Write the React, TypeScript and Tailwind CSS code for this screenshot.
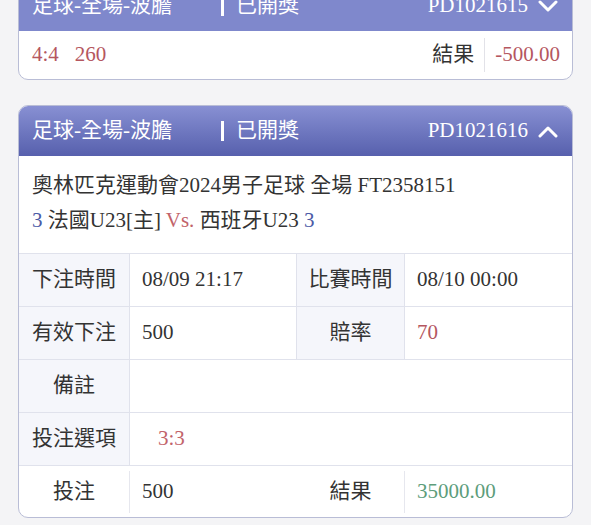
import React from "react";

const FONT = { fontFamily: '"Liberation Serif", "Noto Sans CJK TC", serif' };

function Chevron({ up }: { up?: boolean }) {
  return (
    <svg width="20" height="14" viewBox="0 0 20 14" className="ml-[10px]">
      <path
        d={up ? "M2 12 L10 4 L18 12" : "M2 3 L10 11 L18 3"}
        fill="none"
        stroke="white"
        strokeWidth="3"
        strokeLinecap="round"
        strokeLinejoin="round"
      />
    </svg>
  );
}

function Header({ id, up, flat }: { id: string; up?: boolean; flat?: boolean }) {
  return (
    <div
      className={`h-[50px] flex items-center pl-[13px] pr-[14px] text-white text-[21px] ${
        flat ? "bg-[#7f88cc]" : "bg-gradient-to-b from-[#8890d3] to-[#5760ad]"
      }`}
    >
      <span className="w-[189px]">足球-全場-波膽</span>
      <span className="w-[3px] h-[20px] bg-white mr-[12px]" />
      <span>已開獎</span>
      <span className="ml-auto flex items-center">
        {id}
        <Chevron up={up} />
      </span>
    </div>
  );
}

export default function App() {
  return (
    <div className="w-[591px] h-[525px] overflow-hidden bg-[#f4f4f6] text-[#333]" style={FONT}>
      <div className="px-[18px]">
        {/* Card 1 (cut off) */}
        <div className="-mt-[20px] rounded-[10px] border border-[#b9bdd6] bg-white overflow-hidden">
          <Header id="PD1021615" flat />
          <div className="h-[48px] flex items-center pl-[13px] pr-[12px] text-[21px]">
            <span className="text-[#b5575f]">4:4</span>
            <span className="text-[#b5575f] ml-[16px]">260</span>
            <span className="ml-auto">結果</span>
            <span className="w-px h-[34px] bg-[#e2e2e8] mx-[10px]" />
            <span className="text-[#b5575f]">-500.00</span>
          </div>
        </div>

        {/* Card 2 */}
        <div className="mt-[25px] rounded-[10px] border border-[#b9bdd6] bg-white overflow-hidden">
          <Header id="PD1021616" up />
          <div className="pl-[13px] pt-[12px] pb-[15px] text-[21px] leading-[35px]">
            <div>奧林匹克運動會2024男子足球 全場 FT2358151</div>
            <div>
              <span className="text-[#4b5aa6]">3</span> 法國U23[主]{" "}
              <span className="text-[#c2636a]">Vs.</span> 西班牙U23{" "}
              <span className="text-[#4b5aa6]">3</span>
            </div>
          </div>
          <div className="grid grid-cols-[111px_167px_108px_1fr] text-[21px]">
            {/* row 1 */}
            <div className="h-[53px] flex items-center justify-center bg-[#f5f6fb] border-t border-r border-[#e0e2ec]">下注時間</div>
            <div className="h-[53px] flex items-center pl-[12px] border-t border-r border-[#e0e2ec]">08/09 21:17</div>
            <div className="h-[53px] flex items-center justify-center bg-[#f5f6fb] border-t border-r border-[#e0e2ec]">比賽時間</div>
            <div className="h-[53px] flex items-center pl-[12px] border-t border-[#e0e2ec]">08/10 00:00</div>
            {/* row 2 */}
            <div className="h-[53px] flex items-center justify-center bg-[#f5f6fb] border-t border-r border-[#e0e2ec]">有效下注</div>
            <div className="h-[53px] flex items-center pl-[12px] border-t border-r border-[#e0e2ec]">500</div>
            <div className="h-[53px] flex items-center justify-center bg-[#f5f6fb] border-t border-r border-[#e0e2ec]">賠率</div>
            <div className="h-[53px] flex items-center pl-[12px] border-t border-[#e0e2ec] text-[#b5575f]">70</div>
            {/* row 3 */}
            <div className="h-[53px] flex items-center justify-center bg-[#f5f6fb] border-t border-r border-[#e0e2ec]">備註</div>
            <div className="col-span-3 h-[53px] border-t border-[#e0e2ec]" />
            {/* row 4 */}
            <div className="h-[53px] flex items-center justify-center bg-[#f5f6fb] border-t border-r border-[#e0e2ec]">投注選項</div>
            <div className="col-span-3 h-[53px] flex items-center pl-[28px] border-t border-[#e0e2ec] text-[#c2636a]">3:3</div>
            {/* row 5 */}
            <div className="col-span-4 h-[52px] border-t border-[#e0e2ec] flex items-center">
              <div className="w-[111px] h-[42px] flex items-center justify-center border-r border-[#e6e7ee]">投注</div>
              <div className="w-[167px] flex items-center pl-[12px]">500</div>
              <div className="w-[108px] h-[42px] flex items-center justify-center border-r border-[#e6e7ee]">結果</div>
              <div className="flex items-center pl-[12px] text-[#5d9d7b]">35000.00</div>
            </div>
          </div>
        </div>
      </div>
    </div>
  );
}
